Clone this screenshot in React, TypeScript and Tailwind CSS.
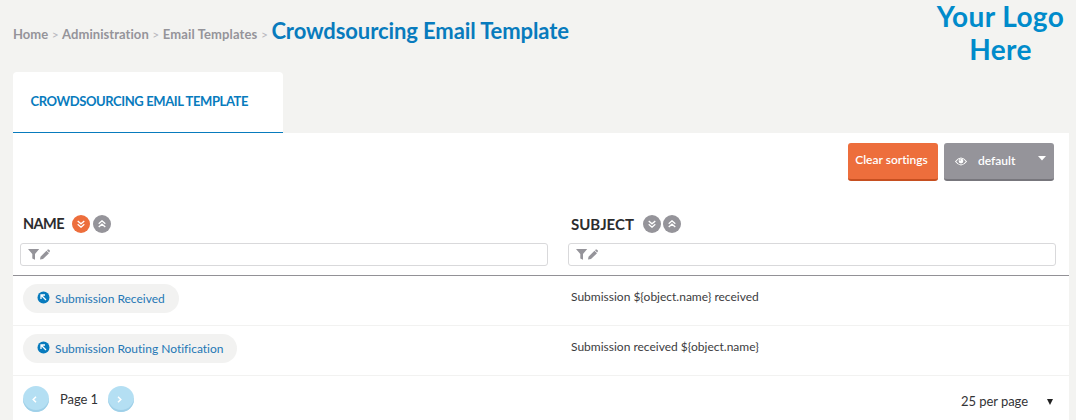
import type { ReactNode } from "react";

function Chevrons({ up = false, active = false }: { up?: boolean; active?: boolean }) {
  return (
    <button
      className={`flex size-[18px] items-center justify-center rounded-full ${active ? "bg-[#ed6e3c]" : "bg-[#95949a]"}`}
    >
      <svg width="8" height="8" viewBox="0 0 8 8" fill="none" stroke="#fff" strokeWidth="1.3" className={up ? "rotate-180" : ""}>
        <path d="M.7.9 4 3.8 7.3.9M.7 4.3 4 7.2 7.3 4.3" />
      </svg>
    </button>
  );
}

function Filter() {
  return (
    <div className="flex h-[23px] items-center rounded-[3px] border border-[#d9d9db] bg-white pl-[7px]">
      <svg width="24" height="13" viewBox="0 0 24 13" fill="#95949a">
        <path d="M0 1h11.2L7 6v5.8L4.3 10.4V6z" />
        <path d="m12 11.5.5-2.8 6-5.9 2.5 2.5-6 5.7zM19 2.3l.7-.7q.6-.4 1.1 0l1 1q.4.5 0 1l-.7.9z" />
      </svg>
    </div>
  );
}

function Heading({ title, active, width, tracking }: { title: string; active?: boolean; width: string; tracking: string }) {
  return (
    <div className={width}>
      <div className="flex h-[18px] items-center pl-[3px]">
        <h2 className={`leading-[18px] font-bold text-[#2c2c2e] ${tracking}`}>{title}</h2>
        <div className={active === undefined ? "flex gap-[2px]" : "flex gap-[3px]"}>
          <Chevrons active={active} />
          <Chevrons up />
        </div>
      </div>
      <div className="mt-[10px]">
        <Filter />
      </div>
    </div>
  );
}

function Row({ name, subject, pill }: { name: ReactNode; subject: string; pill: string }) {
  return (
    <div className="flex h-[50px] border-b border-[#f2f2f1] pt-2 pl-[10px]">
      <div className="w-[548px]">
        <a className={`flex h-[29px] items-center rounded-full bg-[#f2f2f1] pl-[14px] text-[#2477b5] ${pill}`}>
          <svg width="13" height="13" viewBox="0 0 13 13" className="-mt-[3px] mr-[5px]">
            <circle cx="6.5" cy="6.5" r="6" fill="#087bbd" />
            <path d="M4 8V4h4M4.2 4.2 9 9" fill="none" stroke="#fff" strokeWidth="1.3" />
          </svg>
          <span className="text-[12px] leading-4 whitespace-nowrap">{name}</span>
        </a>
      </div>
      <p className="pt-[5px] text-[12px] leading-4 text-[#3c3c3e]">{subject}</p>
    </div>
  );
}

function PageButton({ next = false }: { next?: boolean }) {
  return (
    <button className="flex size-[26px] items-center justify-center rounded-full bg-[#b4dff3] pr-[3px] shadow-[inset_0_-2px_0_#a0d0e8]">
      <svg width="5" height="7" viewBox="0 0 5 7" fill="none" stroke="#fff" strokeWidth="1.5" className={next ? "rotate-180" : ""}>
        <path d="M4 .8 1.2 3.5 4 6.2" />
      </svg>
    </button>
  );
}

export default function App() {
  return (
    <div className="h-[420px] w-[1076px] overflow-hidden bg-[#f3f3f1] font-['Lato',sans-serif] [font-variant-ligatures:none]">
      <header className="flex h-[72px] justify-between pr-[10px] pl-[13px]">
        <nav className="flex items-baseline pt-[17px] text-[13px] font-bold whitespace-nowrap text-[#95949a]">
          <span>Home</span>
          <span className="mx-[3.5px] text-[12px] font-normal text-[#b7b7be]">&gt;</span>
          <span className="tracking-[0.06px]">Administration</span>
          <span className="mx-[3.5px] text-[12px] font-normal text-[#b7b7be]">&gt;</span>
          <span className="tracking-[0.13px]">Email Templates</span>
          <span className="mx-[3.5px] text-[12px] font-normal text-[#b7b7be]">&gt;</span>
          <h1 className="text-[22px] leading-[27px] tracking-[-0.1px] text-[#087bbd]">Crowdsourcing Email Template</h1>
        </nav>
        <div className="w-[131px] text-center text-[28px] leading-[33px] font-bold tracking-[0.4px] whitespace-nowrap text-[#008bcb]">
          <div>Your Logo</div>
          <div>Here</div>
        </div>
      </header>
      <div className="ml-[13px] flex h-[61px] w-[270px] items-center rounded-t-[4px] border-b border-[#087bbd] bg-white pb-[1px] pl-[17.5px]">
        <span className="text-[13px] font-bold tracking-[-0.4px] whitespace-nowrap text-[#087bbd]">CROWDSOURCING EMAIL TEMPLATE</span>
      </div>
      <main className="mr-[7px] ml-[13px] h-[287px] bg-white">
        <div className="flex h-[82px] justify-end gap-[6px] pt-[10px] pr-[15px]">
          <button className="h-[38px] w-[90px] rounded-[3px] border-b-2 border-[#c64f20] bg-[#ed6e3c] pr-[3px] pb-[2px] text-[12px] font-semibold whitespace-nowrap text-white">
            Clear sortings
          </button>
          <button className="flex h-[38px] w-[110px] rounded-[3px] border-b-2 border-[#77767c] bg-[#95949a] pl-[11px] text-white">
            <svg width="12" height="9" viewBox="0 0 13 9" className="mt-[14px]" fill="none" stroke="#fff">
              <path d="M.6 4.5Q6.5-3 12.4 4.5 6.5 12 .6 4.5Z" strokeWidth="1.1" />
              <circle cx="6.5" cy="4" r="2.6" fill="#fff" stroke="none" />
              <path d="M5.3 3.8q0-1.2 1.2-1.2" stroke="#95949a" strokeWidth=".7" />
            </svg>
            <span className="mt-[10px] ml-[11px] w-[60px] text-left text-[12px] leading-4 font-semibold">default</span>
            <svg width="8" height="5" viewBox="0 0 8 5" className="mt-[13px]">
              <path d="M0 0h8L4 4.6z" fill="#fff" />
            </svg>
          </button>
        </div>
        <div className="flex h-[61px] gap-[20px] border-b border-[#929196] pl-[7px]">
          <Heading title="NAME" active width="w-[528px]" tracking="w-[49px] text-[14.5px] tracking-[-0.6px]" />
          <Heading title="SUBJECT" width="w-[488px]" tracking="w-[72px] text-[15px]" />
        </div>
        <Row name="Submission Received" subject="Submission ${object.name} received" pill="w-[156px]" />
        <Row name="Submission Routing Notification" subject="Submission received ${object.name}" pill="w-[214px]" />
        <footer className="flex items-start justify-between pt-[10px] pr-[16px] pl-[10px] text-[13px] text-[#333336]">
          <div className="flex items-center">
            <PageButton />
            <span className="w-[59px] pt-[2px] pl-px text-center tracking-[-0.1px]">Page 1</span>
            <PageButton next />
          </div>
          <div className="flex items-center pt-[6px]">
            <span className="tracking-[-0.05px]">25 per page</span>
            <svg width="6" height="6" viewBox="0 0 6 6" className="ml-[19px]">
              <path d="M0 0h6L3 6z" fill="#222" />
            </svg>
          </div>
        </footer>
      </main>
    </div>
  );
}
